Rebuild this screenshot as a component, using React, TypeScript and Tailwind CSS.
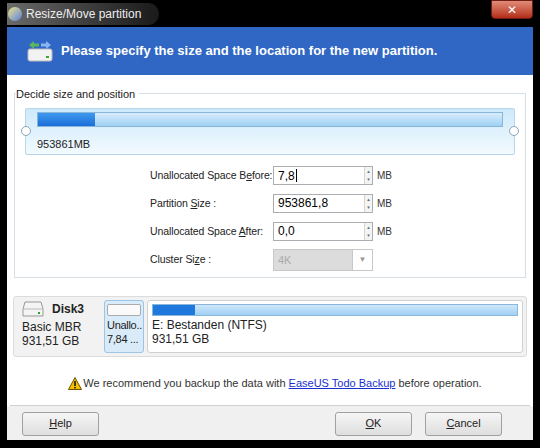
import React from "react";

const Spin = ({ value, caret }: { value: string; caret?: boolean }) => (
  <div className="flex items-center gap-1">
    <div className="flex h-[19px] w-[100px] border border-[#abadb3] bg-white">
      <div className="flex-1 px-1 text-[12px] leading-[17px] text-black">
        {value}
        {caret && <span className="ml-px inline-block h-[13px] w-px translate-y-[2px] bg-black" />}
      </div>
      <div className="flex w-[8px] flex-col border-l border-[#d5d5d5] bg-[#f4f4f4] text-[5px] leading-[8px] text-[#666]">
        <span className="text-center">▴</span>
        <span className="text-center">▾</span>
      </div>
    </div>
    <span className="text-[10px] text-[#333]">MB</span>
  </div>
);

const Row = ({ label, children }: { label: React.ReactNode; children: React.ReactNode }) => (
  <div className="flex h-[19px] items-center">
    <div className="w-[123px] whitespace-nowrap text-[10.5px] tracking-[-0.1px] text-[#222]">{label}</div>
    {children}
  </div>
);

const Btn = ({ children, w }: { children: React.ReactNode; w: string }) => (
  <div className={`${w} flex h-[24px] items-center justify-center rounded-[3px] border border-[#a0a0a0] bg-gradient-to-b from-[#f6f6f6] to-[#dedede] text-[11px] text-[#222]`}>
    {children}
  </div>
);

export default function App() {
  return (
    <div className="h-[448px] w-[540px] bg-black p-[7px] pt-0" style={{ fontFamily: "'Liberation Sans', 'DejaVu Sans', sans-serif" }}>
      {/* title bar */}
      <div className="flex h-[27px] items-center justify-between">
        <div className="flex items-center gap-1 rounded-r-[12px] bg-gradient-to-r from-[#6a6a6a] to-[#1a1a1a] py-[2px] pl-[1px] pr-[18px]">
          <div className="h-[14px] w-[14px] rounded-full bg-gradient-to-br from-[#f4e27a] to-[#5b7bd6]" />
          <span className="text-[12px] text-[#eee]">Resize/Move partition</span>
        </div>
        <div className="mb-[5px] flex h-[19px] w-[42px] items-center justify-center self-start rounded-b-[4px] border border-[#6d1d14] bg-gradient-to-b from-[#e08a78] to-[#b32a16] text-[12px] font-bold text-white">
          ✕
        </div>
      </div>
      <div className="flex h-[413px] flex-col bg-white">
        {/* header */}
        <div className="flex h-[48px] items-center gap-2 bg-[#3067c4] px-[20px]">
          <svg width="26" height="22" viewBox="0 0 26 22">
            <rect x="1" y="9" width="24" height="12" rx="2" fill="#f2f2f2" stroke="#bbb" />
            <rect x="19" y="16" width="3" height="2" fill="#3a3" />
            <path d="M2 5 L7 1 L7 3.5 L12 3.5 L12 6.5 L7 6.5 L7 9 Z" fill="#5cb85c" />
            <path d="M24 5 L19 1 L19 3.5 L14 3.5 L14 6.5 L19 6.5 L19 9 Z" fill="#8ab4f0" />
          </svg>
          <span className="text-[13px] font-bold text-white">Please specify the size and the location for the new partition.</span>
        </div>
        {/* group box */}
        <div className="relative mx-[7px] mt-[18px] h-[185px] border border-[#d5dfe5] pt-[14px]">
          <span className="absolute -top-[8px] left-[1px] bg-white pr-1 text-[11px] text-[#222]">Decide size and position</span>
          <div className="relative mx-[10px] h-[47px] rounded-[2px] border border-[#b8d6ea] bg-gradient-to-b from-[#cde9fa] to-[#f2fafe] px-[11px] pt-[3px]">
            <div className="h-[15px] border border-[#8ab6dc] bg-gradient-to-b from-[#d8edfb] to-[#9fd0f4]">
              <div className="h-full w-[57px] bg-gradient-to-b from-[#3f98ee] to-[#1a6fd8]" />
            </div>
            <div className="mt-[9px] text-[11px] text-[#222]">953861MB</div>
            <div className="absolute -left-[5px] top-[17px] h-[10px] w-[10px] rounded-full border border-[#8aa6b8] bg-white" />
            <div className="absolute -right-[5px] top-[17px] h-[10px] w-[10px] rounded-full border border-[#8aa6b8] bg-white" />
          </div>
          <div className="ml-[135px] mt-[11px] flex flex-col gap-[9px]">
            <Row label={<>Unallocated Space B<u>e</u>fore:</>}>
              <Spin value="7,8" caret />
            </Row>
            <Row label={<>Partition <u>S</u>ize :</>}>
              <Spin value="953861,8" />
            </Row>
            <Row label={<>Unallocated Space <u>A</u>fter:</>}>
              <Spin value="0,0" />
            </Row>
            <Row label={<>Cluster Si<u>z</u>e :</>}>
              <div className="flex h-[22px] w-[100px] border border-[#c8c8c8] bg-[#dcdcdc]">
                <div className="flex-1 px-1 text-[11px] leading-[20px] text-[#aaa]">4K</div>
                <div className="flex w-[20px] items-center justify-center border-l border-[#c8c8c8] bg-white text-[8px] text-[#999]">▼</div>
              </div>
            </Row>
          </div>
        </div>
        {/* disk map */}
        <div className="mx-[6px] mt-[18px] flex h-[61px] gap-[3px] rounded-[3px] border border-[#dcdcdc] bg-[#f2f2f2] p-[3px] pl-[8px]">
          <div className="w-[79px] text-[12px] leading-[14px] text-[#222]">
            <div className="flex items-center gap-2">
              <svg width="22" height="18" viewBox="0 0 22 18">
                <path d="M3 2 H19 L21 9 V16 H1 V9 Z" fill="#f4f4f4" stroke="#999" />
                <path d="M1 9 H21" stroke="#bbb" />
                <rect x="16" y="12" width="2" height="2" fill="#2a2" />
              </svg>
              <span className="text-[12px] font-bold">Disk3</span>
            </div>
            <div className="mt-[2px]">Basic MBR</div>
            <div>931,51 GB</div>
          </div>
          <div className="w-[40px] rounded-[3px] border border-[#9cc4e4] bg-[#d9ebf8] px-[2px] pt-[3px] text-[11px] leading-[14px] tracking-[-0.3px] text-[#222]">
            <div className="mb-[2px] h-[12px] rounded-[2px] border border-[#aaa] bg-[#fafafa]" />
            <div className="whitespace-nowrap">Unallo..</div>
            <div className="whitespace-nowrap">7,84 ...</div>
          </div>
          <div className="flex-1 rounded-[3px] border border-[#d0d0d0] bg-white px-[4px] pt-[3px] text-[12px] leading-[14px] text-[#222]">
            <div className="mb-[2px] h-[12px] border border-[#8ab6dc] bg-gradient-to-b from-[#cfe7fa] to-[#9fd0f4]">
              <div className="h-full w-[42px] bg-[#1f78dc]" />
            </div>
            <div>E: Bestanden (NTFS)</div>
            <div>931,51 GB</div>
          </div>
        </div>
        {/* warning */}
        <div className="mt-[18px] flex items-center justify-center gap-[1px] pl-[10px] text-[11px] text-[#333]">
          <svg width="14" height="13" viewBox="0 0 14 13">
            <path d="M7 0.5 L13.5 12.5 H0.5 Z" fill="#f5c000" stroke="#6b5200" />
            <rect x="6.3" y="4" width="1.4" height="5" fill="#000" />
            <rect x="6.3" y="10" width="1.4" height="1.4" fill="#000" />
          </svg>
          <span>
            We recommend you backup the data with <span className="text-[#1a2fd0] underline">EaseUS Todo Backup</span> before operation.
          </span>
        </div>
        <div className="mx-[3px] mt-[13px] border-t border-[#d0d0d0] bg-[#f0f0f0]" />
        <div className="flex flex-1 items-start bg-[#f0f0f0] px-[15px] pt-[6px]">
          <Btn w="w-[77px]"><u>H</u>elp</Btn>
          <div className="flex-1" />
          <div className="flex gap-[13px] pr-[16px]">
            <Btn w="w-[77px]"><u>O</u>K</Btn>
            <Btn w="w-[77px]"><u>C</u>ancel</Btn>
          </div>
        </div>
      </div>
    </div>
  );
}
